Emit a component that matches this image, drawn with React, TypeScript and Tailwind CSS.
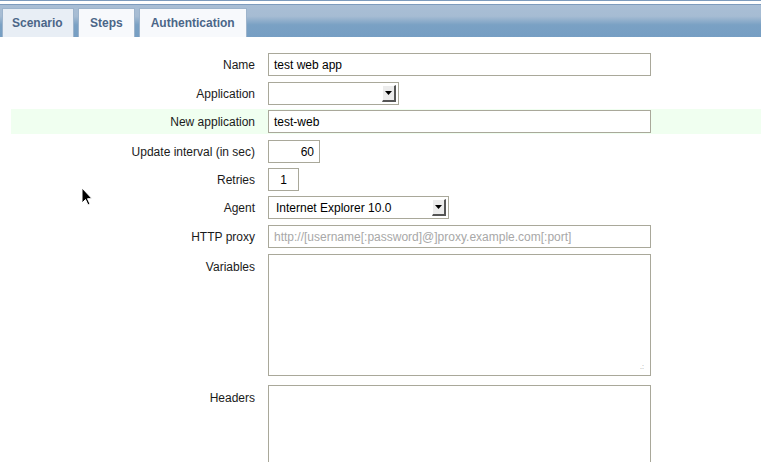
import type { ReactNode } from 'react';

const tabs = ['Scenario', 'Steps', 'Authentication'];

function SelectArrow() {
  return (
    <span className="ml-auto mr-[1px] flex h-[17px] w-[14px] items-center justify-center border-t border-l border-white border-r-2 border-b-2 border-r-[#555] border-b-[#555] bg-[#ececec]">
      <svg width="7" height="4" viewBox="0 0 7 4">
        <path d="M0 0h7L3.5 4z" fill="#000" />
      </svg>
    </span>
  );
}

function Row({ label, children, className = '', top = false }: { label: string; children: ReactNode; className?: string; top?: boolean }) {
  return (
    <div className={`flex ${top ? 'items-start' : 'items-center'} ${className}`}>
      <div className={`w-[245px] shrink-0 pr-[1px] text-right text-[12px] text-[#1a1a1a] ${top ? 'pt-[4px]' : ''}`}>{label}</div>
      <div className="ml-[12px] flex">{children}</div>
    </div>
  );
}

function Cursor() {
  return (
    <svg className="absolute left-[81px] top-[187px]" width="14" height="21" viewBox="0 0 14 21">
      <path d="M1 1v15l3.5-3.5 2.5 5.5 2-1-2.5-5.3H11z" fill="#000" stroke="#fff" strokeWidth="1" />
    </svg>
  );
}

export default function App() {
  const input = 'h-[23px] border border-[#a9a89a] bg-white px-[5px] text-[12px] flex items-center';
  return (
    <div className="relative h-[462px] w-[761px] overflow-hidden bg-white font-['Liberation_Sans',Arial,sans-serif]">
      <div className="h-[1px] bg-[#7d9bbd]" />
      <div className="mt-[3px] border-t border-[#7d9bbd] bg-[linear-gradient(to_bottom,#a9bed5_0%,#a6bcd3_35%,#7aa1c4_62%,#769ec3_100%)] pt-[3px]">
        <div className="flex h-[29px] items-end gap-[4px] pl-[2px]">
          {tabs.map((t, i) => (
            <div
              key={t}
              className={`flex h-[29px] items-center border border-b-0 border-[#9db4cc] text-[12px] font-bold text-[#4b6688] ${
                i === 0 ? 'w-[72px] bg-[#e8eef5] px-[9px]' : 'bg-[#f7f9fc] px-[11px]'
              }`}
            >
              {t}
            </div>
          ))}
        </div>
      </div>

      <div className="pl-[11px] pt-[16px]">
        <Row label="Name">
          <div className={`${input} w-[383px] text-black`}>test web app</div>
        </Row>
        <Row label="Application" className="mt-[6px]">
          <div className={`${input} w-[131px] pr-[1px]`}>
            <SelectArrow />
          </div>
        </Row>
        <Row label="New application" className="mt-[4px] bg-[#f0fff0] py-[1px]">
          <div className={`${input} w-[383px] text-black`}>test-web</div>
        </Row>
        <Row label="Update interval (in sec)" className="mt-[6px]">
          <div className={`${input} w-[52px] justify-end text-black`}>60</div>
        </Row>
        <Row label="Retries" className="mt-[5px]">
          <div className={`${input} w-[31px] justify-center text-black`}>1</div>
        </Row>
        <Row label="Agent" className="mt-[5px]">
          <div className={`${input} w-[181px] pl-[7px] pr-[1px] text-black`}>
            <span>Internet Explorer 10.0</span>
            <SelectArrow />
          </div>
        </Row>
        <Row label="HTTP proxy" className="mt-[6px]">
          <div className={`${input} w-[383px] text-[#a8a8a8]`}>http://[username[:password]@]proxy.example.com[:port]</div>
        </Row>
        <Row label="Variables" className="mt-[6px]" top>
          <div className="relative h-[122px] w-[383px] border border-[#a9a89a] bg-white">
            <span className="absolute bottom-[5px] right-[6px] text-[7px] leading-none text-[#999]">.:</span>
          </div>
        </Row>
        <Row label="Headers" className="mt-[9px]" top>
          <div className="h-[100px] w-[383px] border border-[#a9a89a] bg-white" />
        </Row>
      </div>

      <Cursor />
    </div>
  );
}
